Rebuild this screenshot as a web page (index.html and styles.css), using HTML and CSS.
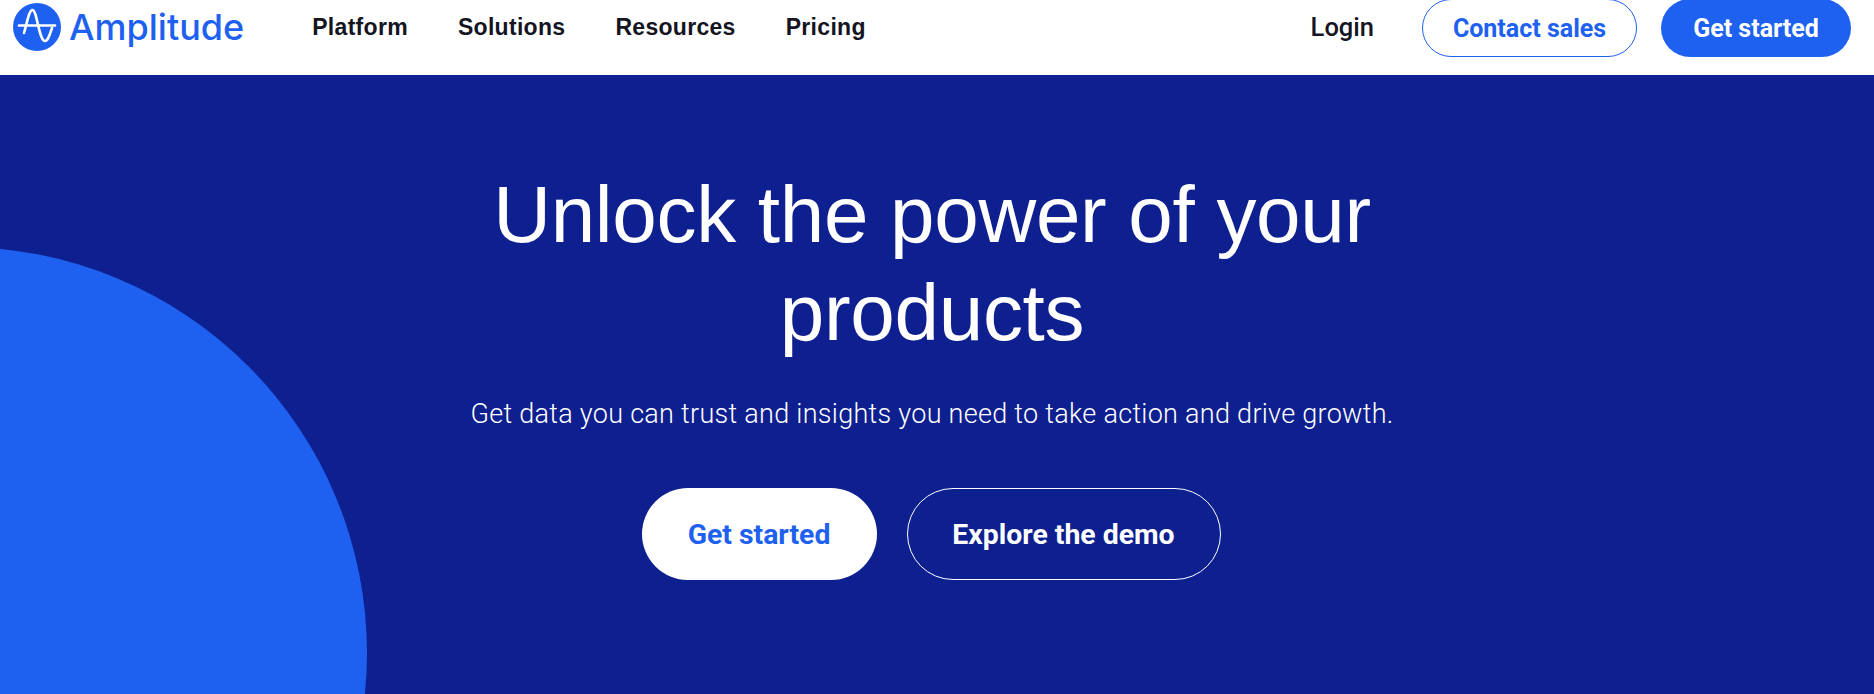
FILE: index.html
```html
<!DOCTYPE html>
<html>
<head>
<meta charset="utf-8">
	<title>Amplitude</title>
	<link rel="stylesheet" href="styles.css">
</head>
<body>
	<div class="nav">
		<a class="logo" href="#">
			<svg class="logoMark" viewBox="0 0 48 48" width="48" height="48">
				<circle cx="24" cy="24" r="24" fill="#1E61F0"/>
				<path d="M6 22.5H42" fill="none" stroke="#fff" stroke-width="2.6" stroke-linecap="round"/>
				<path d="M11 30C14 20 16 7 19.5 7C24 7 26 38 32 38C35 38 37 31 39 25" fill="none" stroke="#fff" stroke-width="2.6" stroke-linecap="round"/>
			</svg>
			<span class="logoText">Amplitude</span>
		</a>
		<div class="navLinks">
			<a href="#">Platform</a>
			<a href="#">Solutions</a>
			<a href="#">Resources</a>
			<a href="#">Pricing</a>
		</div>
		<div class="navRight">
			<a class="login" href="#">Login</a>
			<a class="btnSmall btnOutline" href="#">Contact sales</a>
			<a class="btnSmall btnBlue" href="#">Get started</a>
		</div>
	</div>
	<div class="hero">
		<div class="circle"></div>
		<div class="heroContent">
			<h1>Unlock the power of your products</h1>
			<p>Get data you can trust and insights you need to take action and drive growth.</p>
			<div class="heroBtns">
				<a class="btnBig btnWhite" href="#">Get started</a>
				<a class="btnBig btnGhost" href="#">Explore the demo</a>
			</div>
		</div>
	</div>
</body>
</html>
```

FILE: styles.css
```css
html, body{
	margin: 0px;
	padding: 0px;
	height: 100%;
	overflow: hidden;
}
a{
	text-decoration: none;
}
.nav{
	display: flex;
	justify-content: space-between;
	height: 75px;
	padding: 0px 23px 0px 13px;
	background-color: #fff;
}
.logo{
	display: flex;
	align-items: center;
	gap: 8px;
	height: 54px;
}
.logoMark{
	flex: none;
}
.logoText{
	font-family: "Inter", sans-serif;
	font-size: 36px;
	font-weight: 500;
	color: #1E61F0;
}
.navLinks{
	display: flex;
	align-items: center;
	gap: 50px;
	height: 54px;
	margin-left: 68px;
	margin-right: auto;
	font-family: "Liberation Sans", sans-serif;
	font-size: 23px;
	font-weight: bold;
	letter-spacing: 0.3px;
}
.navLinks a{
	color: #15151f;
}
.navRight{
	display: flex;
	align-items: flex-start;
	font-family: "Roboto", sans-serif;
	font-weight: 700;
}
.login{
	margin-right: 48px;
	line-height: 55px;
	font-size: 25.5px;
	font-weight: 500;
	color: #15151f;
}
.btnSmall{
	display: flex;
	align-items: center;
	justify-content: center;
	height: 58px;
	margin-top: -1px;
	box-sizing: border-box;
	border-radius: 29px;
	font-size: 25px;
}
.btnOutline{
	width: 215px;
	margin-right: 24px;
	border: 1px solid #1E61F0;
	color: #1E61F0;
}
.btnBlue{
	width: 190px;
	background-color: #1E61F0;
	color: #fff;
}
.hero{
	position: relative;
	height: 619px;
	overflow: hidden;
	background-color: #0E1F8F;
}
.circle{
	position: absolute;
	left: -445px;
	top: 172px;
	width: 812px;
	height: 812px;
	border-radius: 50%;
	background-color: #1E61F0;
}
.heroContent{
	position: relative;
	display: flex;
	flex-direction: column;
	align-items: center;
	width: 1864px;
	padding-top: 91px;
	text-align: center;
	color: #fff;
}
h1{
	width: 1000px;
	margin: 0px;
	font-family: "Liberation Sans", sans-serif;
	font-size: 80px;
	font-weight: normal;
	line-height: 98px;
	letter-spacing: -0.3px;
}
p{
	margin: 32px 0px 0px 0px;
	font-family: "Roboto", sans-serif;
	font-size: 27px;
	font-weight: 300;
	line-height: 40px;
	letter-spacing: 0.28px;
}
.heroBtns{
	display: flex;
	gap: 30px;
	margin: 54px 2px 0px 0px;
	font-family: "Roboto", sans-serif;
	font-weight: 700;
	font-size: 28.4px;
}
.btnBig{
	display: flex;
	align-items: center;
	justify-content: center;
	height: 92px;
	box-sizing: border-box;
	border-radius: 46px;
}
.btnWhite{
	width: 235px;
	background-color: #fff;
	color: #1E61F0;
}
.btnGhost{
	width: 314px;
	border: 1px solid #fff;
	color: #fff;
}
```
